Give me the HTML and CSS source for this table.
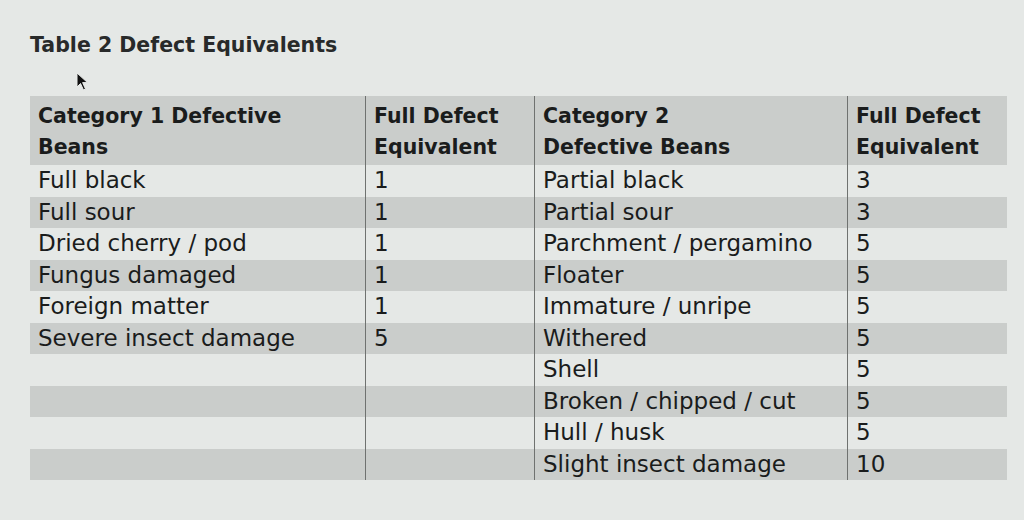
FILE: index.html
```html
<!DOCTYPE html>
<html>
<head>
<meta charset="utf-8">
<link rel="stylesheet" href="styles.css">
</head>
<body>
<div class="page">
  <h1 class="title">Table 2 Defect Equivalents</h1>
  <svg class="cursor" width="14" height="20" viewBox="0 0 14 20"><path d="M1 1 L1 15 L4.5 11.5 L7.5 18 L9.5 17 L6.6 10.6 L11.5 10.6 Z" fill="#111" stroke="#e8ebe9" stroke-width="1"/></svg>
  <table class="defects">
    <thead>
      <tr class="shade">
        <th class="c1">Category 1 Defective<br>Beans</th>
        <th class="c2">Full Defect<br>Equivalent</th>
        <th class="c3">Category 2<br>Defective Beans</th>
        <th class="c4">Full Defect<br>Equivalent</th>
      </tr>
    </thead>
    <tbody>
      <tr><td class="c1">Full black</td><td class="c2">1</td><td class="c3">Partial black</td><td class="c4">3</td></tr>
      <tr class="shade"><td class="c1">Full sour</td><td class="c2">1</td><td class="c3">Partial sour</td><td class="c4">3</td></tr>
      <tr><td class="c1">Dried cherry / pod</td><td class="c2">1</td><td class="c3">Parchment / pergamino</td><td class="c4">5</td></tr>
      <tr class="shade"><td class="c1">Fungus damaged</td><td class="c2">1</td><td class="c3">Floater</td><td class="c4">5</td></tr>
      <tr><td class="c1">Foreign matter</td><td class="c2">1</td><td class="c3">Immature / unripe</td><td class="c4">5</td></tr>
      <tr class="shade"><td class="c1">Severe insect damage</td><td class="c2">5</td><td class="c3">Withered</td><td class="c4">5</td></tr>
      <tr><td class="c1"></td><td class="c2"></td><td class="c3">Shell</td><td class="c4">5</td></tr>
      <tr class="shade"><td class="c1"></td><td class="c2"></td><td class="c3">Broken / chipped / cut</td><td class="c4">5</td></tr>
      <tr><td class="c1"></td><td class="c2"></td><td class="c3">Hull / husk</td><td class="c4">5</td></tr>
      <tr class="shade"><td class="c1"></td><td class="c2"></td><td class="c3">Slight insect damage</td><td class="c4">10</td></tr>
    </tbody>
  </table>
</div>
</body>
</html>
```

FILE: styles.css
```css
html, body {
  margin: 0;
  padding: 0;
}
body {
  width: 1024px;
  height: 520px;
  overflow: hidden;
  background: #e5e8e6;
  font-family: "DejaVu Sans", sans-serif;
  color: #1a1c1c;
}
.page {
  position: relative;
  padding: 33px 0 0 30px;
}
.title {
  margin: 0 0 39px 0;
  font-size: 20.5px;
  font-weight: 700;
  color: #282a2a;
  line-height: 24px;
}
.cursor {
  position: absolute;
  left: 76px;
  top: 72px;
}
.defects {
  border-collapse: collapse;
  width: 977px;
  font-size: 23px;
}
.defects th,
.defects td {
  text-align: left;
  padding: 0 8px;
  vertical-align: middle;
  white-space: nowrap;
}
.defects th {
  font-size: 20.5px;
  font-weight: 700;
  line-height: 31px;
  height: 67px;
  padding-top: 2px;
}
.defects td {
  height: 31.5px;
  line-height: 31px;
  font-weight: 400;
}
.defects .c1 { width: 319px; }
.defects .c2 { width: 152px; border-left: 1px solid #6f7270; }
.defects .c3 { width: 296px; border-left: 1px solid #6f7270; }
.defects .c4 { border-left: 1px solid #6f7270; }
.shade {
  background: #cacdcb;
}
```
